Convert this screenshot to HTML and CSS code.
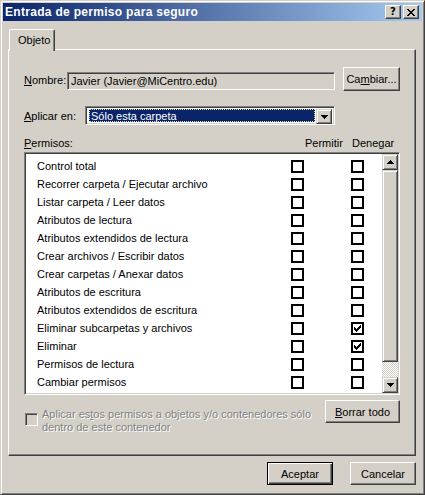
FILE: index.html
```html
<!DOCTYPE html>
<html lang="es">
<head>
<meta charset="utf-8">
<title>Entrada de permiso para seguro</title>
<link rel="stylesheet" href="styles.css">
</head>
<body>
<div class="window">
  <div class="titlebar">
    <span class="title">Entrada de permiso para seguro</span>
    <div class="tbtns">
      <span class="tbtn help">?</span>
      <span class="tbtn close"><svg width="8" height="7" viewBox="0 0 8 7" shape-rendering="crispEdges"><path d="M0 0h2v1h-2zM6 0h2v1h-2zM1 1h2v1h-2zM5 1h2v1h-2zM2 2h4v1h-4zM3 3h2v1h-2zM2 4h4v1h-4zM1 5h2v1h-2zM5 5h2v1h-2zM0 6h2v1h-2zM6 6h2v1h-2z" fill="#000"/></svg></span>
    </div>
  </div>
  <div class="client">
    <div class="tabs"><div class="tab">Objeto</div></div>
    <div class="panel">
      <div class="row-name">
        <span class="lbl-name"><u>N</u>ombre:</span>
        <div class="field">Javier (Javier@MiCentro.edu)</div>
        <button class="btn btn-cambiar">Ca<u>m</u>biar...</button>
      </div>
      <div class="row-apply">
        <span class="lbl-apply"><u>A</u>plicar en:</span>
        <div class="combo">
          <div class="combo-sel"><span class="combo-text">Sólo esta carpeta</span></div>
          <div class="combo-btn"><svg width="7" height="4" viewBox="0 0 7 4" shape-rendering="crispEdges"><path d="M0 0h7v1h-7zM1 1h5v1h-5zM2 2h3v1h-3zM3 3h1v1h-1z" fill="#000"/></svg></div>
        </div>
      </div>
      <div class="row-head">
        <span class="head-perm"><u>P</u>ermisos:</span>
        <span class="head-col head-allow">Permitir</span>
        <span class="head-col head-deny">Denegar</span>
      </div>
      <div class="listbox">
        <div class="items">
          <div class="item"><span class="name">Control total</span><span class="cb"></span><span class="cb"></span></div>
          <div class="item"><span class="name">Recorrer carpeta / Ejecutar archivo</span><span class="cb"></span><span class="cb"></span></div>
          <div class="item"><span class="name">Listar carpeta / Leer datos</span><span class="cb"></span><span class="cb"></span></div>
          <div class="item"><span class="name">Atributos de lectura</span><span class="cb"></span><span class="cb"></span></div>
          <div class="item"><span class="name">Atributos extendidos de lectura</span><span class="cb"></span><span class="cb"></span></div>
          <div class="item"><span class="name">Crear archivos / Escribir datos</span><span class="cb"></span><span class="cb"></span></div>
          <div class="item"><span class="name">Crear carpetas / Anexar datos</span><span class="cb"></span><span class="cb"></span></div>
          <div class="item"><span class="name">Atributos de escritura</span><span class="cb"></span><span class="cb"></span></div>
          <div class="item"><span class="name">Atributos extendidos de escritura</span><span class="cb"></span><span class="cb"></span></div>
          <div class="item"><span class="name">Eliminar subcarpetas y archivos</span><span class="cb"></span><span class="cb"><svg width="9" height="9" viewBox="0 0 9 9" shape-rendering="crispEdges"><path d="M1 3h1v3h-1zM2 4h1v3h-1zM3 5h1v3h-1zM4 4h1v3h-1zM5 3h1v3h-1zM6 2h1v3h-1zM7 1h1v3h-1z" fill="#000"/></svg></span></div>
          <div class="item"><span class="name">Eliminar</span><span class="cb"></span><span class="cb"><svg width="9" height="9" viewBox="0 0 9 9" shape-rendering="crispEdges"><path d="M1 3h1v3h-1zM2 4h1v3h-1zM3 5h1v3h-1zM4 4h1v3h-1zM5 3h1v3h-1zM6 2h1v3h-1zM7 1h1v3h-1z" fill="#000"/></svg></span></div>
          <div class="item"><span class="name">Permisos de lectura</span><span class="cb"></span><span class="cb"></span></div>
          <div class="item"><span class="name">Cambiar permisos</span><span class="cb"></span><span class="cb"></span></div>
          <div class="item"><span class="name"></span><span class="cb"></span><span class="cb"></span></div>
        </div>
        <div class="scrollbar">
          <div class="sb-btn"><svg width="7" height="4" viewBox="0 0 7 4" shape-rendering="crispEdges"><path d="M3 0h1v1h-1zM2 1h3v1h-3zM1 2h5v1h-5zM0 3h7v1h-7z" fill="#000"/></svg></div>
          <div class="sb-thumb"></div>
          <div class="sb-track"></div>
          <div class="sb-btn"><svg width="7" height="4" viewBox="0 0 7 4" shape-rendering="crispEdges"><path d="M0 0h7v1h-7zM1 1h5v1h-5zM2 2h3v1h-3zM3 3h1v1h-1z" fill="#000"/></svg></div>
        </div>
      </div>
      <div class="row-bottom">
        <div class="inherit">
          <span class="cb-disabled"></span>
          <span class="inherit-text">Aplicar es<u>t</u>os permisos a objetos y/o contenedores sólo<br>dentro de este contenedor</span>
        </div>
        <button class="btn btn-borrar"><u>B</u>orrar todo</button>
      </div>
    </div>
    <div class="footer">
      <button class="btn btn-default">Aceptar</button>
      <button class="btn btn-foot">Cancelar</button>
    </div>
  </div>
</div>
</body>
</html>
```
FILE: styles.css
```css
* { box-sizing: border-box; }
html, body { margin: 0; padding: 0; }
body {
  width: 425px;
  height: 495px;
  overflow: hidden;
  background: #d4d0c8;
  font-family: "Liberation Sans", Arial, sans-serif;
  font-size: 11px;
  color: #000;
}
u { text-decoration: underline; text-underline-offset: 1px; }

.window {
  width: 425px;
  height: 495px;
  border: 1px solid;
  border-color: #d4d0c8 #404040 #404040 #d4d0c8;
  box-shadow: inset 1px 1px #fff, inset -1px -1px #808080;
  padding: 2px;
  display: flex;
  flex-direction: column;
}

.titlebar {
  height: 18px;
  flex: none;
  background: linear-gradient(to right, #0a246a, #a6caf0);
  display: flex;
  align-items: center;
  padding: 0 3px 0 2px;
}
.title {
  flex: 1;
  color: #fff;
  font-weight: bold;
  font-size: 12px;
  letter-spacing: 0.3px;
  white-space: nowrap;
}
.tbtns { display: flex; gap: 2px; }
.tbtn {
  width: 16px;
  height: 14px;
  background: #d4d0c8;
  border: 1px solid;
  border-color: #fff #404040 #404040 #fff;
  box-shadow: inset -1px -1px #808080;
  display: flex;
  align-items: center;
  justify-content: center;
}
.help {
  font-family: "DejaVu Sans", sans-serif;
  font-weight: bold;
  font-size: 10px;
  line-height: 12px;
}

.client {
  flex: 1;
  padding: 8px 0 0 5px;
  display: flex;
  flex-direction: column;
}

.tabs { display: flex; height: 21px; flex: none; position: relative; z-index: 1; margin-bottom: -1px; }
.tab {
  margin-left: 1px;
  width: 46px;
  height: 22px;
  background: #d4d0c8;
  border-top: 1px solid #fff;
  border-left: 1px solid #fff;
  border-right: 1px solid #404040;
  box-shadow: inset -1px 0 #808080;
  border-radius: 2px 2px 0 0;
  padding-top: 4px;
  padding-left: 8px;
}

.panel {
  width: 408px;
  height: 407px;
  flex: none;
  border: 1px solid;
  border-color: #fff #404040 #404040 #fff;
  box-shadow: inset -1px -1px #808080;
  padding: 0 15px 0 15px;
  display: flex;
  flex-direction: column;
}

.row-name { display: flex; margin-top: 17px; height: 24px; }
.lbl-name { width: 43px; padding-top: 7px; }
.field {
  width: 268px;
  height: 18px;
  margin-top: 5px;
  border: 1px solid;
  border-color: #808080 #fff #fff #808080;
  box-shadow: inset 1px 1px #404040, inset -1px -1px #d4d0c8;
  padding: 2px 0 0 3px;
  white-space: nowrap;
}

.btn {
  font-family: "Liberation Sans", Arial, sans-serif;
  font-size: 11px;
  color: #000;
  background: #d4d0c8;
  border: 1px solid;
  border-color: #fff #404040 #404040 #fff;
  box-shadow: inset -1px -1px #808080;
  padding: 0;
  margin: 0;
  text-align: center;
}
.btn-cambiar { width: 57px; height: 24px; margin-left: 8px; }

.row-apply { display: flex; align-items: center; margin-top: 15px; height: 19px; }
.lbl-apply { width: 61px; }
.combo {
  width: 250px;
  height: 19px;
  border: 1px solid;
  border-color: #808080 #fff #fff #808080;
  box-shadow: inset 1px 1px #404040, inset -1px -1px #d4d0c8;
  background: #fff;
  padding: 2px;
  display: flex;
}
.combo-sel {
  flex: 1;
  margin: 0 1px 0 1px;
  background: #0a246a;
  border: 1px dotted #e0d890;
  color: #fff;
  line-height: 13px;
  padding-left: 1px;
}
.combo-btn {
  width: 16px;
  height: 15px;
  background: #d4d0c8;
  border: 1px solid;
  border-color: #d4d0c8 #404040 #404040 #d4d0c8;
  box-shadow: inset 1px 1px #fff, inset -1px -1px #808080;
  display: flex;
  align-items: center;
  justify-content: center;
}

.row-head { display: flex; margin-top: 12px; height: 13px; line-height: 13px; }
.head-perm { flex: 1; }
.head-allow { width: 47px; }
.head-deny { width: 48px; }

.listbox {
  margin-top: 2px;
  height: 243px;
  border: 1px solid;
  border-color: #808080 #fff #fff #808080;
  box-shadow: inset 1px 1px #404040, inset -1px -1px #d4d0c8;
  padding: 1px;
  background: #fff;
  display: flex;
}
.items { flex: 1; overflow: hidden; padding-top: 3px; }
.item {
  display: grid;
  grid-template-columns: 265px 60px 1fr;
  align-items: center;
  height: 18px;
}
.name { padding-left: 11px; white-space: nowrap; }
.cb {
  width: 13px;
  height: 13px;
  border: 2px solid #000;
  background: #fff;
  display: flex;
  align-items: center;
  justify-content: center;
}
.cb svg { display: block; }

.scrollbar { width: 16px; display: flex; flex-direction: column; }
.sb-btn, .sb-thumb {
  background: #d4d0c8;
  border: 1px solid;
  border-color: #d4d0c8 #404040 #404040 #d4d0c8;
  box-shadow: inset 1px 1px #fff, inset -1px -1px #808080;
}
.sb-btn { height: 16px; display: flex; align-items: center; justify-content: center; }
.sb-thumb { height: 192px; }
.sb-track {
  flex: 1;
  background: repeating-conic-gradient(#fff 0 25%, #d4d0c8 0 50%) 0 0 / 2px 2px;
}

.row-bottom { display: flex; justify-content: space-between; margin-top: 5px; }
.inherit { display: flex; margin-top: 8px; }
.cb-disabled {
  width: 13px;
  height: 13px;
  margin-left: 1px;
  margin-top: 5px;
  border: 1px solid;
  border-color: #808080 #fff #fff #808080;
  box-shadow: inset 1px 1px #404040, inset -1px -1px #d4d0c8;
  background: #d4d0c8;
}
.inherit-text {
  margin-left: 4px;
  line-height: 13px;
  color: #808080;
  text-shadow: 1px 1px 0 #fff;
}
.btn-borrar { width: 75px; height: 23px; }

.footer { display: flex; justify-content: flex-end; gap: 17px; margin-top: 6px; width: 408px; }
.btn-foot { width: 66px; height: 23px; }
.btn-default {
  width: 66px;
  height: 23px;
  border: 1px solid #000;
  box-shadow: inset 1px 1px #fff, inset -1px -1px #404040, inset -2px -2px #808080;
}
```
